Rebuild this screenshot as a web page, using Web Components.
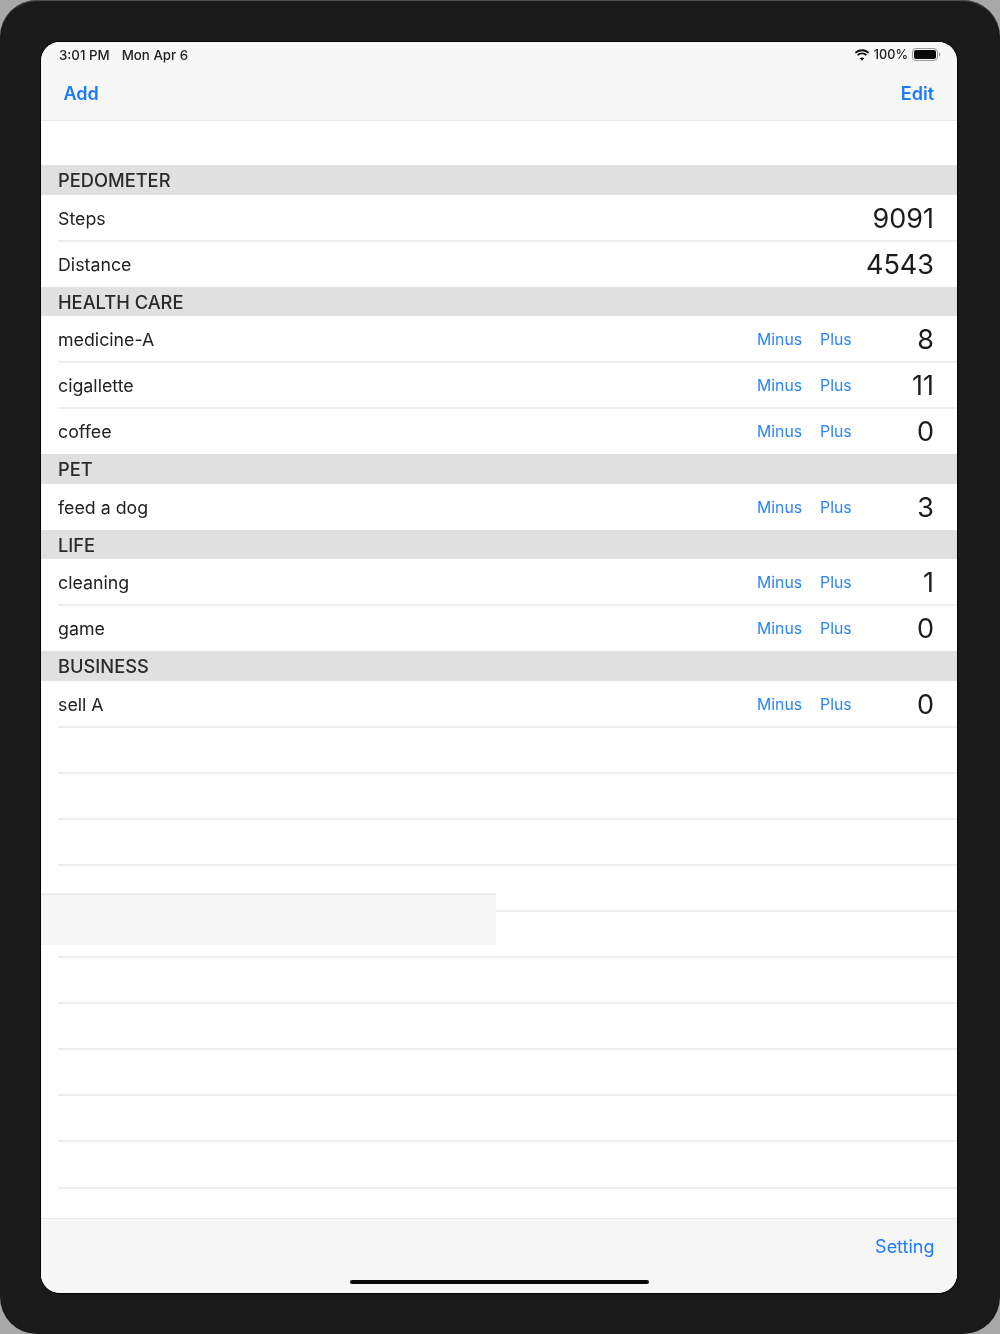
<!DOCTYPE html>
<html><head><meta charset="utf-8">
<style>
html,body{margin:0;padding:0;width:1000px;height:1334px;overflow:hidden;background:#a8a8a8}
body{font-family:Inter,"Liberation Sans",sans-serif}
</style></head><body>
<tablet-frame>
  <status-bar slot="top" time="3:01 PM" date="Mon Apr 6" battery="100%"></status-bar>
  <nav-bar slot="top"><bar-link bold size="18">Add</bar-link><bar-link bold size="18">Edit</bar-link></nav-bar>
  <table-view>
    <section-header>PEDOMETER</section-header>
    <value-row label="Steps" value="9091"></value-row>
    <value-row label="Distance" value="4543" noline></value-row>
    <section-header>HEALTH CARE</section-header>
    <value-row label="medicine-A" value="8" actions></value-row>
    <value-row label="cigallette" value="11" actions></value-row>
    <value-row label="coffee" value="0" actions noline></value-row>
    <section-header>PET</section-header>
    <value-row label="feed a dog" value="3" actions noline></value-row>
    <section-header>LIFE</section-header>
    <value-row label="cleaning" value="1" actions></value-row>
    <value-row label="game" value="0" actions noline></value-row>
    <section-header>BUSINESS</section-header>
    <value-row label="sell A" value="0" actions></value-row>
    <value-row></value-row><value-row></value-row><value-row></value-row><value-row></value-row><value-row></value-row>
    <value-row></value-row><value-row></value-row><value-row></value-row><value-row></value-row><value-row></value-row>
    <value-row noline></value-row>
  </table-view>
  <tool-bar slot="bottom"><bar-link size="18">Setting</bar-link></tool-bar>
  <ghost-strip slot="overlay"></ghost-strip>
</tablet-frame>
<script>
function def(name, css, html){
  customElements.define(name, class extends HTMLElement{
    constructor(){super();this.attachShadow({mode:'open'});}
    connectedCallback(){
      const h = typeof html==='function'?html(this):html;
      this.shadowRoot.innerHTML='<style>'+css+'</style>'+h;
    }
  });
}
def('tablet-frame',`
  :host{display:block;width:1000px;height:1334px;box-sizing:border-box;background:#1a1a1a;border-radius:37px;padding:42px 43px 41px 41px;position:relative;box-shadow:inset 0 2px 1px -1px #555;filter:blur(.45px)}
  .screen{position:relative;height:100%;background:#fff;border-radius:19px;overflow:hidden;display:flex;flex-direction:column;box-shadow:0 0 0 1px #050505}
  .mid{flex:1;min-height:0;overflow:hidden}
`,`<div class="screen"><slot name="top"></slot><div class="mid"><slot></slot></div><slot name="bottom"></slot><slot name="overlay"></slot></div>`);
def('status-bar',`
  :host{display:flex;align-items:center;justify-content:space-between;height:25.500px;padding:0 16px 0 18px;background:#f7f7f7;font:500 13.300px/26px Inter,"Liberation Sans",sans-serif;color:#222}
  .l{display:flex;gap:12px}.r{display:flex;align-items:center;gap:4px;font-size:12.700px}
  svg{display:block}
`,t=>`<div class="l"><span>${t.getAttribute('time')}</span><span>${t.getAttribute('date')}</span></div>
  <div class="r"><svg width="16" height="12" viewBox="0 0 16 12"><path fill="#111" d="M8 2.2c2.3 0 4.4.9 6 2.4l1.2-1.3C13.3 1.4 10.8.3 8 .3S2.700 1.400.8 3.300L2 4.600c1.600-1.500 3.700-2.400 6-2.400zM8 5.300c1.500 0 2.800.6 3.800 1.500l1.200-1.300C11.700 4.200 9.900 3.500 8 3.500s-3.700.7-5 2L4.200 6.800C5.200 5.900 6.500 5.300 8 5.300zM8 8.400c-.9 0-1.700.3-2.300.9L8 11.800l2.300-2.500c-.6-.6-1.400-.9-2.300-.9z"/></svg><span>${t.getAttribute('battery')}</span>
  <svg width="29" height="13" viewBox="0 0 29 13"><rect x=".5" y=".5" width="25" height="12" rx="3.500" fill="none" stroke="#999"/><rect x="2" y="2" width="22" height="9" rx="2" fill="#0a0a0a"/><path d="M27 4.500v4c.8-.3 1.400-1.100 1.400-2s-.6-1.700-1.400-2z" fill="#999"/></svg></div>`);
def('nav-bar',`
  :host{display:flex;align-items:center;justify-content:space-between;box-sizing:border-box;height:53.500px;padding:1px 23px 0 22.500px;background:#f7f7f7;border-bottom:1px solid #e6e6e6;margin-bottom:44.300px}
`,`<slot></slot>`);
def('bar-link',`
  :host{display:block;color:#1a7bfb;font-family:Inter,"Liberation Sans",sans-serif;line-height:24px}
`,t=>`<span style="font-size:${t.getAttribute('size')}px;font-weight:${t.hasAttribute('bold')?600:400}"><slot></slot></span>`);
def('table-view',`:host{display:block;background:#fff}`,`<slot></slot>`);
def('section-header',`
  :host{display:flex;align-items:center;box-sizing:border-box;height:29.300px;padding:1.500px 0 0 17px;background:#e0e0e0;color:#2a2a2a;font:500 18.300px/27px Inter,"Liberation Sans",sans-serif}
`,`<slot></slot>`);
def('value-row',`
  :host{display:block;height:46.100px;padding-left:17px;box-sizing:border-box}
  .in{display:flex;align-items:center;box-sizing:border-box;height:calc(100% + 1px);padding:3px 23px 0 0;border-bottom:2px solid #eeeeee;color:#222}
  :host([noline]) .in{border-bottom-color:transparent}
  .label{flex:1;font:400 17.800px/24px Inter,"Liberation Sans",sans-serif}
  .acts{display:flex;gap:18px;width:95px;margin-right:52px;color:#2b85f8;font:400 15.800px/20px Inter,"Liberation Sans",sans-serif}
  .val{font:400 27px/34px Inter,"Liberation Sans",sans-serif;color:#1c1c1c;min-width:30px;text-align:right}
`,t=>{
  const l=t.getAttribute('label');
  if(l===null) return '<div class="in"></div>';
  return `<div class="in"><span class="label">${l}</span>${t.hasAttribute('actions')?'<span class="acts"><span>Minus</span><span>Plus</span></span>':''}<span class="val">${t.getAttribute('value')}</span></div>`;
});
def('tool-bar',`
  :host{display:block;position:relative;box-sizing:border-box;height:75.500px;background:#f7f7f7;border-top:1px solid #e6e6e6;padding:16px 22.500px 0 0}
  .row{display:flex;justify-content:flex-end}
  .home{position:absolute;left:309px;top:61px;width:299px;height:4.500px;border-radius:3px;background:#0a0a0a}
`,`<div class="row"><slot></slot></div><div class="home"></div>`);
def('ghost-strip',`
  :host{display:block;position:absolute;left:0;top:851px;width:455px;height:51.500px;box-sizing:border-box;background:#f7f7f7;border-top:2px solid #ebebeb}
`,``);
</script>
</body></html>
